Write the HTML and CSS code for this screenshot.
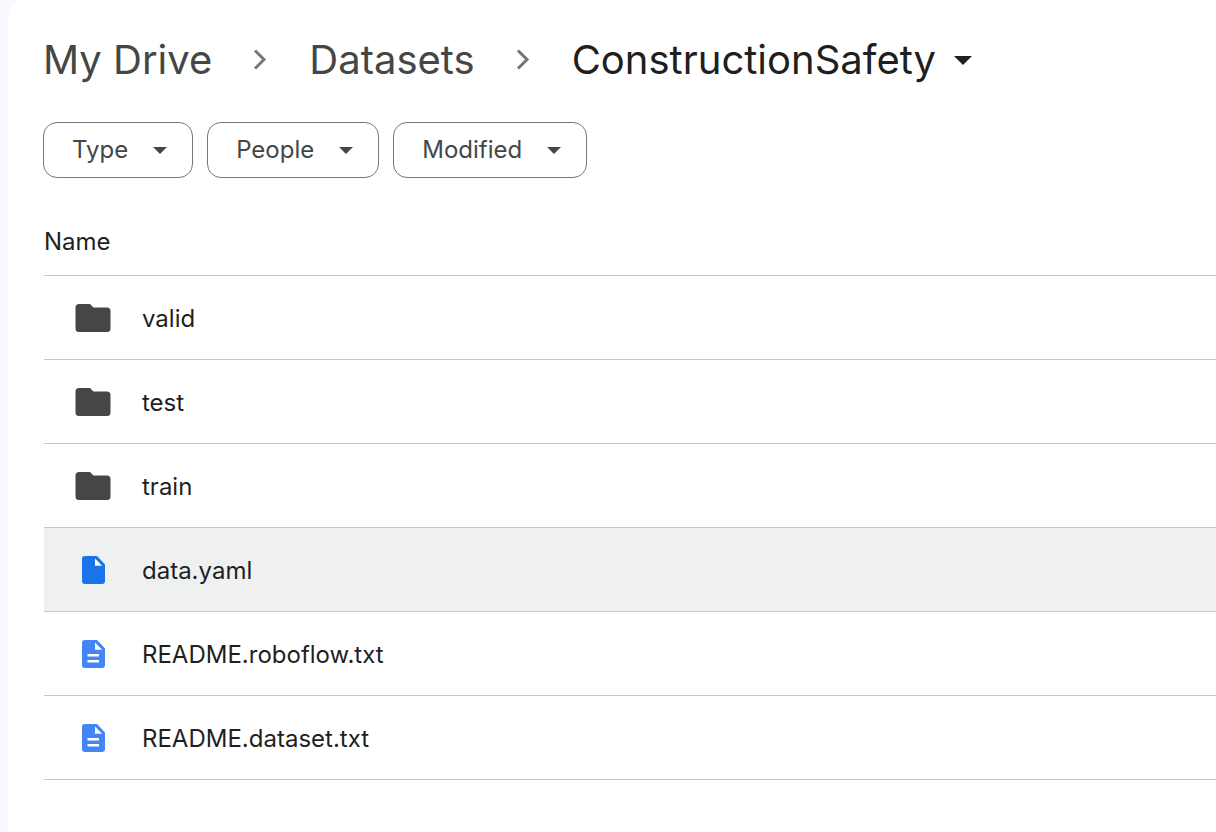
FILE: index.html
```html
<!DOCTYPE html>
<html lang="en">
<head>
<meta charset="utf-8">
<meta name="viewport" content="width=device-width, initial-scale=1">
<title>ConstructionSafety</title>
<link rel="stylesheet" href="styles.css">
</head>
<body>
<svg class="sprite" aria-hidden="true">
  <symbol id="caret" viewBox="0 0 10 5"><path d="M0 0h10L5 5z"/></symbol>
  <symbol id="chevron" viewBox="0 0 14 22"><path d="M2 1.500l9 9-9 9" fill="none" stroke="currentColor" stroke-width="3"/></symbol>
  <symbol id="folder" viewBox="0 0 36 28"><path d="M4 0h11l3.500 3.500h13.500A3.500 3.500 0 0 1 35.500 7v17.500a3.500 3.500 0 0 1-3.500 3.500h-28A3.500 3.500 0 0 1 .5 24.500v-21A3.500 3.500 0 0 1 4 0z"/></symbol>
  <symbol id="file" viewBox="0 0 24 28"><path d="M3.500 0h12l8 8.500V25a3 3 0 0 1-3 3h-17a3 3 0 0 1-3-3V3a3 3 0 0 1 3-3z"/><path d="M13.500 2.500v7.200h7.200z" fill="#fff"/></symbol>
</svg>
<main class="panel">
  <nav class="crumbs" aria-label="Breadcrumb">
    <a class="crumb" href="#drive">My Drive</a>
    <svg class="chevron"><use href="#chevron"/></svg>
    <a class="crumb" href="#datasets">Datasets</a>
    <svg class="chevron"><use href="#chevron"/></svg>
    <button class="crumb current" type="button">ConstructionSafety<svg class="caret-large"><use href="#caret"/></svg></button>
  </nav>
  <div class="filters">
    <button class="chip" type="button"><span>Type</span><svg class="caret"><use href="#caret"/></svg></button>
    <button class="chip" type="button"><span>People</span><svg class="caret"><use href="#caret"/></svg></button>
    <button class="chip" type="button"><span>Modified</span><svg class="caret"><use href="#caret"/></svg></button>
  </div>
  <table class="files">
    <thead>
      <tr><th scope="col">Name</th></tr>
    </thead>
    <tbody>
      <tr><td><div class="entry"><svg class="icon folder"><use href="#folder"/></svg><span>valid</span></div></td></tr>
      <tr><td><div class="entry"><svg class="icon folder"><use href="#folder"/></svg><span>test</span></div></td></tr>
      <tr><td><div class="entry"><svg class="icon folder"><use href="#folder"/></svg><span>train</span></div></td></tr>
      <tr class="hovered"><td><div class="entry"><svg class="icon file" viewBox="-6.500 0 36 28"><use href="#file" width="24" height="28"/></svg><span>data.yaml</span></div></td></tr>
      <tr><td><div class="entry"><svg class="icon doc" viewBox="-6.500 0 36 28"><use href="#file" width="24" height="28"/><path d="M6 14h11.500v2.500H6zM6 20h11.500v2.500H6z" fill="#fff"/></svg><span>README.roboflow.txt</span></div></td></tr>
      <tr><td><div class="entry"><svg class="icon doc" viewBox="-6.500 0 36 28"><use href="#file" width="24" height="28"/><path d="M6 14h11.500v2.500H6zM6 20h11.500v2.500H6z" fill="#fff"/></svg><span>README.dataset.txt</span></div></td></tr>
    </tbody>
  </table>
</main>
</body>
</html>
```

FILE: styles.css
```css
* {
  box-sizing: border-box;
}

body {
  margin: 0;
  padding-left: 8px;
  background: #f9faff;
  font-family: Inter, sans-serif;
  font-size: 24px;
  color: #1f1f1f;
}

button {
  font: inherit;
  cursor: pointer;
}

svg {
  fill: currentColor;
  flex: none;
}

.sprite {
  position: absolute;
  width: 0;
  height: 0;
}

.panel {
  min-height: 100vh;
  padding: 29px 0 0 35px;
  border-top-left-radius: 14px 24px;
  background: #fff;
}

.crumbs {
  display: flex;
  align-items: center;
  height: 62px;
  font-size: 40px;
  line-height: 62px;
}

.crumb {
  color: #444746;
  text-decoration: none;
}

.current {
  display: flex;
  align-items: center;
  gap: 18px;
  padding: 0;
  border: 0;
  background: none;
  color: #1f1f1f;
}

.chevron {
  width: 14px;
  height: 22px;
  margin: 0 42px 0 41px;
  color: #747775;
}

.caret-large {
  width: 18px;
  height: 9px;
}

.filters {
  display: flex;
  gap: 14px;
  margin-top: 31px;
}

.chip {
  display: flex;
  align-items: center;
  gap: 25px;
  height: 56px;
  padding: 0 25px 0 28px;
  border: 1px solid #747775;
  border-radius: 14px;
  background: #fff;
  color: #444746;
}

.chip span {
  padding-bottom: 2px;
}

.caret {
  width: 14px;
  height: 7px;
}

.files {
  width: 100%;
  margin-top: 30px;
  padding-left: 1px;
  border-collapse: separate;
  border-spacing: 0;
}

.files th,
.files td {
  padding: 0;
  border-bottom: 1px solid #c4c7c5;
  text-align: left;
  font-weight: 400;
}

.files th {
  height: 68px;
}

.entry {
  display: flex;
  align-items: center;
  gap: 31px;
  height: 83px;
  padding-left: 31px;
}

.entry span {
  padding-top: 2px;
}

.icon {
  width: 36px;
  height: 28px;
  color: #444746;
}

.file {
  color: #1a73e8;
}

.doc {
  color: #4285f4;
}

.hovered {
  background: #eff1f1;
}
```
